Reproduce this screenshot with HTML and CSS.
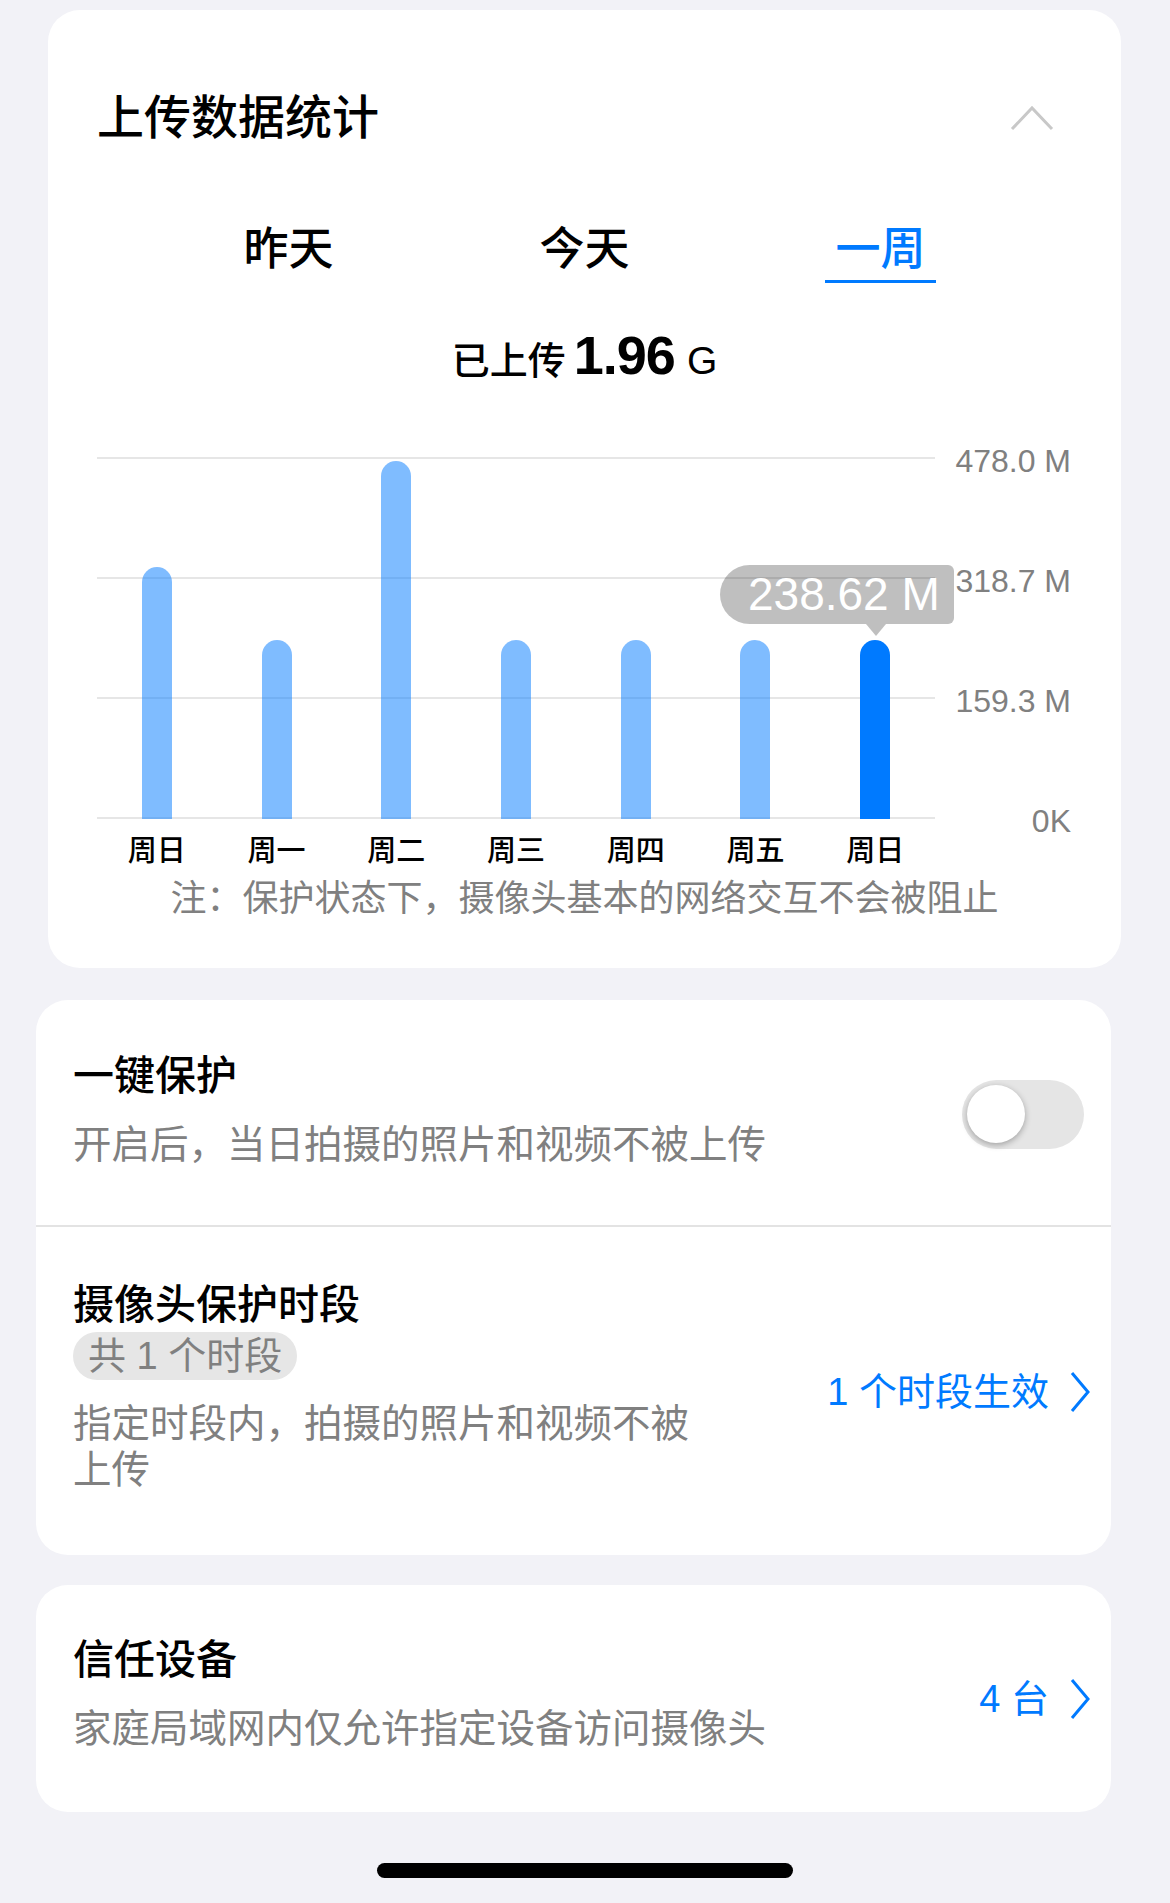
FILE: index.html
```html
<!DOCTYPE html>
<html lang="zh-CN">
  <head>
    <meta charset="utf-8">
    <title>上传数据统计</title>
    <link rel="stylesheet" href="styles.css">
  </head>

  <body>
    <div class="page">

      <!-- upload statistics -->
      <div class="card stats">
        <div class="stats-head">
          <h2 class="stats-title">上传数据统计</h2>
          <svg class="collapse" width="44" height="26" viewBox="0 0 44 26"><polyline points="2,24 22,3 42,24" fill="none" stroke="#c8c8c8" stroke-width="3"/></svg>
        </div>

        <div class="tabs">
          <div class="tab"><span>昨天</span></div>
          <div class="tab"><span>今天</span></div>
          <div class="tab on"><span>一周</span></div>
        </div>

        <div class="total">
          <span class="total-label">已上传</span>
          <span class="total-num">1.96</span>
          <span class="total-unit">G</span>
        </div>

        <div class="chart">
          <div class="chart-main">
            <div class="plot">
              <div class="slot"><div class="bar" style="height:252px"></div></div>
              <div class="slot"><div class="bar" style="height:179px"></div></div>
              <div class="slot"><div class="bar" style="height:358px"></div></div>
              <div class="slot"><div class="bar" style="height:179px"></div></div>
              <div class="slot"><div class="bar" style="height:179px"></div></div>
              <div class="slot"><div class="bar" style="height:179px"></div></div>
              <div class="slot"><div class="bar on" style="height:179px"></div></div>
              <div class="tip">238.62 M</div>
            </div>
            <div class="xlabels">
              <span>周日</span><span>周一</span><span>周二</span><span>周三</span><span>周四</span><span>周五</span><span>周日</span>
            </div>
          </div>
          <div class="ylabels">
            <span>478.0 M</span>
            <span>318.7 M</span>
            <span>159.3 M</span>
            <span>0K</span>
          </div>
        </div>

        <p class="note">注：保护状态下，摄像头基本的网络交互不会被阻止</p>
      </div>

      <!-- protection settings -->
      <div class="card settings">
        <div class="row row-protect">
          <div class="row-text">
            <div class="row-title">一键保护</div>
            <div class="row-desc">开启后，当日拍摄的照片和视频不被上传</div>
          </div>
          <div class="switch"><div class="knob"></div></div>
        </div>

        <div class="row row-period">
          <div class="row-text">
            <div class="row-title">摄像头保护时段</div>
            <span class="pill">共 1 个时段</span>
            <div class="row-desc">指定时段内，拍摄的照片和视频不被上传</div>
          </div>
          <div class="link">
            <span>1 个时段生效</span>
            <svg width="22" height="42" viewBox="0 0 22 42"><polyline points="3,2 19,21 3,40" fill="none" stroke="#007aff" stroke-width="3"/></svg>
          </div>
        </div>
      </div>

      <div class="card trust">
        <div class="row row-trust">
          <div class="row-text">
            <div class="row-title">信任设备</div>
            <div class="row-desc">家庭局域网内仅允许指定设备访问摄像头</div>
          </div>
          <div class="link">
            <span>4 台</span>
            <svg width="22" height="42" viewBox="0 0 22 42"><polyline points="3,2 19,21 3,40" fill="none" stroke="#007aff" stroke-width="3"/></svg>
          </div>
        </div>
      </div>

      <div class="home"></div>
    </div>
  </body>
</html>
```

FILE: styles.css
```css
body         {  margin: 0;  background: #f2f2f7;  color: #000;  font-family: "Liberation Sans", "Noto Sans CJK SC", sans-serif;  }
.page        {  width: 1170px;  padding-top: 10px;  }
.card        {  background: #fff;  border-radius: 32px;  }

/* statistics card */
.stats       {  margin: 0 49px 0 48px;  padding: 80px 0 47px;  }
.stats-head  {  display: flex;  justify-content: space-between;  align-items: center;  height: 56px;  margin: 0 67px 0 49px;  }
.stats-title {  margin: 0;  font-size: 47px;  line-height: 56px;  font-weight: 500;  }
.collapse    {  display: block;  }

.tabs        {  display: flex;  justify-content: center;  margin-top: 76px;  }
.tab         {  width: 296px;  text-align: center;  font-size: 45px;  line-height: 56px;  font-weight: 500;  }
.tab span    {  display: inline-block;  padding: 0 10px 2px;  border-bottom: 3px solid transparent;  }
.tab.on span {  color: #007aff;  border-bottom-color: #007aff;  }

.total       {  display: flex;  justify-content: center;  align-items: baseline;  margin-top: 42px;  }
.total-label {  margin-right: 8px;  font-size: 38px;  line-height: 44px;  font-weight: 500;  }
.total-num   {  margin-right: 12px;  font-size: 54px;  line-height: 60px;  font-weight: 700;  letter-spacing: -1px;  }
.total-unit  {  font-size: 39px;  line-height: 44px;  font-weight: 500;  }

.chart       {  display: flex;  align-items: flex-start;  margin: 72px 0 0 49px;  }
.plot        {  position: relative;  width: 838px;  height: 362px;  display: flex;  align-items: flex-end;
                background: repeating-linear-gradient(to bottom, #e6e6e6 0 2px, transparent 2px 120px);  }
.slot        {  flex: 1;  display: flex;  justify-content: center;  }
.bar         {  width: 30px;  border-radius: 15px 15px 0 0;  background: rgba(0, 122, 255, 0.5);  }
.bar.on      {  background: #007aff;  }
.tip         {  position: absolute;  left: 623px;  top: 108px;  width: 234px;  height: 59px;  box-sizing: border-box;
                padding-left: 28px;  border-radius: 30px 6px 6px 30px;  background: rgba(0, 0, 0, 0.25);
                color: #fff;  font-size: 46px;  line-height: 59px;  white-space: nowrap;  }
.tip::after  {  content: "";  position: absolute;  top: 100%;  left: 146px;
                border-left: 10px solid transparent;  border-right: 10px solid transparent;  border-top: 12px solid rgba(0, 0, 0, 0.25);  }
.xlabels     {  display: flex;  margin-top: 14px;  }
.xlabels span {  flex: 1;  text-align: center;  font-size: 29px;  line-height: 36px;  font-weight: 500;  }
.ylabels     {  display: flex;  flex-direction: column;  gap: 84px;  width: 136px;  margin-top: -14px;
                text-align: right;  color: #808080;  font-size: 32px;  line-height: 36px;  }
.note        {  margin: 8px 0 0;  text-align: center;  color: #808080;  font-size: 36px;  line-height: 44px;  }

/* settings cards */
.settings    {  margin: 32px 59px 0 36px;  }
.trust       {  margin: 30px 59px 0 36px;  }
.row         {  display: flex;  justify-content: space-between;  align-items: center;  }
.row-protect {  padding: 51px 27px 56px 37px;  }
.row-period  {  padding: 53px 20px 62px 37px;  border-top: 2px solid #e3e3e3;  }
.row-trust   {  padding: 50px 20px 59px 37px;  }
.row-title   {  font-size: 41px;  line-height: 50px;  font-weight: 500;  }
.row-desc    {  margin-top: 20px;  color: #808080;  font-size: 38.5px;  line-height: 48px;  }
.row-period .row-desc {  max-width: 650px;  margin-top: 21px;  line-height: 46px;  }
.pill        {  display: inline-block;  margin-top: 2px;  padding: 0 15px;  height: 48px;  border-radius: 24px;
                background: #e6e6e6;  color: #808080;  font-size: 38px;  line-height: 48px;  }

.switch      {  display: flex;  align-items: center;  width: 122px;  height: 69px;  box-sizing: border-box;  padding: 5px;
                margin-top: 8px;  border-radius: 35px;  background: #e5e5e5;  }
.knob        {  width: 58px;  height: 58px;  border-radius: 50%;  background: #fff;  box-shadow: 0 2px 6px rgba(0, 0, 0, 0.3);  }

.link        {  display: flex;  align-items: center;  gap: 20px;  margin-top: 10px;  color: #007aff;  font-size: 38px;  line-height: 48px;  }
.link svg    {  display: block;  }

.home        {  width: 416px;  height: 15px;  margin: 51px auto 0;  border-radius: 8px;  background: #000;  }
```
